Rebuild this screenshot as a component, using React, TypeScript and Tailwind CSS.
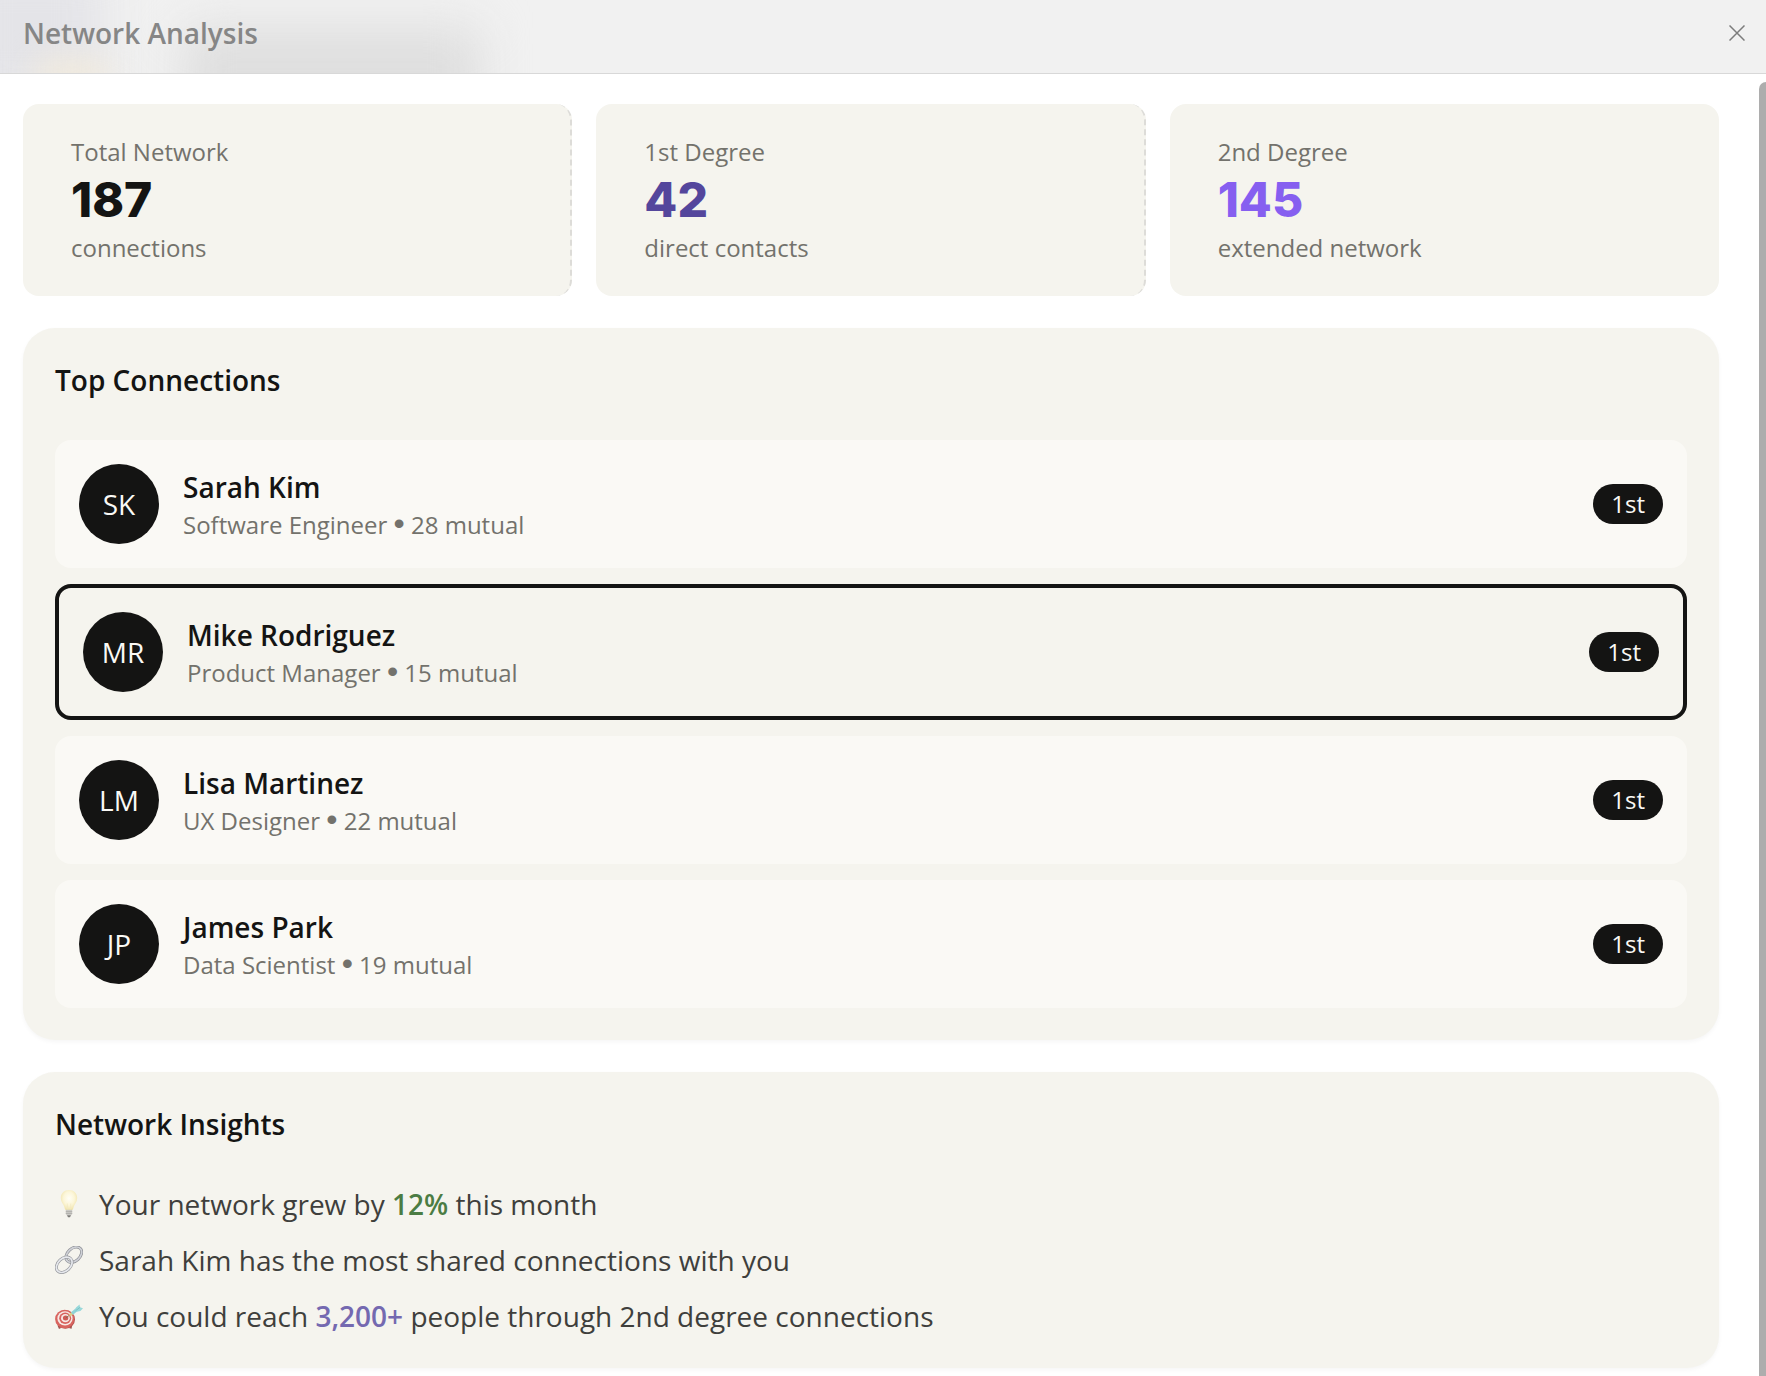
import { useId } from "react";

type Stat = { label: string; value: string; note: string; tone: string; divider: boolean };

const stats: Stat[] = [
  { label: "Total Network", value: "187", note: "connections", tone: "text-[#141413]", divider: true },
  { label: "1st Degree", value: "42", note: "direct contacts", tone: "text-[#54469c]", divider: true },
  { label: "2nd Degree", value: "145", note: "extended network", tone: "text-[#865ff0]", divider: false },
];

const people = [
  { initials: "SK", name: "Sarah Kim", role: "Software Engineer", mutual: 28, selected: false },
  { initials: "MR", name: "Mike Rodriguez", role: "Product Manager", mutual: 15, selected: true },
  { initials: "LM", name: "Lisa Martinez", role: "UX Designer", mutual: 22, selected: false },
  { initials: "JP", name: "James Park", role: "Data Scientist", mutual: 19, selected: false },
];

function CloseIcon() {
  return (
    <svg viewBox="0 0 16 16" className="size-4" fill="none" stroke="#7c7c7c" strokeWidth="1.5" aria-hidden="true">
      <path d="M0.5 0.5 15.5 15.5M15.5 0.5 0.5 15.5" />
    </svg>
  );
}

function BulbIcon() {
  const id = useId();
  return (
    <svg viewBox="0 0 28 28" className="size-7 shrink-0" aria-hidden="true">
      <defs>
        <radialGradient id={id} cx="0.5" cy="0.42" r="0.6">
          <stop offset="0" stopColor="#fffef6" />
          <stop offset="0.55" stopColor="#fcf6d8" />
          <stop offset="1" stopColor="#efe2a8" />
        </radialGradient>
      </defs>
      <path d="M14 0c-4.800 0-8.200 3.300-8.200 7.900 0 3.600 2.100 5.600 3.200 8.200.7 1.700.8 3.400 1.600 4h6.800c.8-.6.900-2.300 1.600-4 1.100-2.600 3.200-4.600 3.200-8.200C22.200 3.300 18.800 0 14 0Z" fill={`url(#${id})`} />
      <path d="M12.600 19.500 12.200 13.500M15.400 19.500 15.800 13.500" stroke="#f1e8c0" strokeWidth="0.7" />
      <path d="M10.800 19.800h6.400v4.200l-1.200 1.500H12l-1.200-1.500Z" fill="#cbcac6" />
      <path d="M10.800 21.600h6.400M10.800 23.500h6.400" stroke="#a9a8a4" strokeWidth="0.7" />
      <path d="M12 25.200h4l-1 2h-2Z" fill="#7d7c79" />
    </svg>
  );
}

function LinkIcon() {
  return (
    <svg viewBox="0 0 28 28" className="size-7 shrink-0" fill="none" aria-hidden="true">
      <g transform="rotate(-43 18.800 8.700)">
        <ellipse cx="18.800" cy="8.700" rx="9" ry="6.300" stroke="#8b8d93" strokeWidth="3" />
        <ellipse cx="18.800" cy="8.700" rx="9" ry="6.300" stroke="#cfd1d7" strokeWidth="1.700" />
      </g>
      <g transform="rotate(-43 9.200 18.800)">
        <ellipse cx="9.200" cy="18.800" rx="9" ry="6.300" stroke="#94969b" strokeWidth="3" />
        <ellipse cx="9.200" cy="18.800" rx="9" ry="6.300" stroke="#e6e8ed" strokeWidth="1.700" />
      </g>
    </svg>
  );
}

function TargetIcon() {
  return (
    <svg viewBox="0 0 28 28" className="size-7 shrink-0" aria-hidden="true">
      <path d="M3.500 23 5 26.500M16 23.500 15.500 26.500" stroke="#a05550" strokeWidth="2.200" />
      <ellipse cx="10.400" cy="17.400" rx="9.600" ry="9.400" fill="#b5504c" />
      <ellipse cx="9.700" cy="17" rx="9.600" ry="9.300" fill="#d9645f" />
      <ellipse cx="10" cy="16.400" rx="7.600" ry="7.200" fill="#f6e9e6" />
      <ellipse cx="10.200" cy="16.300" rx="6" ry="5.700" fill="#d9645f" />
      <ellipse cx="10.400" cy="16.200" rx="4.400" ry="4.100" fill="#f6e9e6" />
      <ellipse cx="10.600" cy="16.100" rx="2.700" ry="2.500" fill="#cf5a55" />
      <path d="M10.800 16 15 12.800" stroke="#7d6f55" strokeWidth="0.900" />
      <path d="M14.500 13.400 17.500 11" stroke="#dccb84" strokeWidth="2.600" />
      <path d="M17 11.500 22.500 7" stroke="#8fd3d6" strokeWidth="3.200" />
      <path d="M20 8.600 21 5.600 24.600 2.600 24.900 5.300 28 6.200 25.400 9 21.600 9.700Z" fill="#98d8da" />
      <path d="M20.500 8.800 25.200 5.200" stroke="#6fb9be" strokeWidth="0.700" />
    </svg>
  );
}

function StatCard({ stat }: { stat: Stat }) {
  return (
    <div className={`rounded-2xl bg-[#f5f4ee] py-8 pl-12 pr-8 ${stat.divider ? "border-r-2 border-dashed border-[#dddcd8]" : ""}`}>
      <p className="text-2xl leading-8 text-[#73726c]">{stat.label}</p>
      <p className={`font-[Inter,sans-serif] text-5xl leading-[64px] font-extrabold ${stat.tone}`}>{stat.value}</p>
      <p className="text-2xl leading-8 text-[#73726c]">{stat.note}</p>
    </div>
  );
}

export default function App() {
  return (
    <div className="flex min-h-screen flex-col bg-white font-['Open_Sans',sans-serif] text-[#141413]">
      <header className="relative flex h-[74px] items-center justify-between overflow-hidden border-b border-black/10 bg-[#f1f1f1] pb-2 pl-[23px] pr-[21px]">
        <div className="absolute -left-10 -top-10 h-36 w-36 bg-[#e4e4e8] blur-xl" />
        <div className="absolute left-9 top-15 h-8 w-18 bg-[#f2ebdc] blur-lg" />
        <div className="absolute left-46 top-7 h-24 w-74 bg-[#dedede] blur-xl" />
        <h1 className="relative text-[28px] leading-10 font-semibold text-[#868686]">Network Analysis</h1>
        <button type="button" aria-label="Close" className="relative flex size-4 items-center justify-center">
          <CloseIcon />
        </button>
      </header>

      <div className="flex flex-1">
        <main className="flex flex-1 flex-col gap-8 pb-2 pl-[23px] pr-10 pt-[30px]">
          <section aria-label="Network totals" className="grid grid-cols-3 gap-6">
            {stats.map((s) => (
              <StatCard key={s.label} stat={s} />
            ))}
          </section>

          <section className="rounded-[32px] bg-[#f5f4ee] p-8 shadow-[0_2px_4px_rgba(0,0,0,0.04)]">
            <h2 className="text-[28px] leading-10 font-semibold">Top Connections</h2>
            <ul className="mt-10 flex flex-col gap-4">
              {people.map((p) => (
                <li
                  key={p.name}
                  className={`flex items-center gap-6 rounded-2xl p-6 ${p.selected ? "border-4 border-[#141413] bg-[#f5f4ee]" : "bg-[#faf9f5]"}`}
                >
                  <span className="flex size-20 items-center justify-center rounded-full bg-[#141413] text-[28px] leading-10 text-[#faf9f5]">
                    {p.initials}
                  </span>
                  <div className="flex-1">
                    <p className="text-[28px] leading-10 font-semibold">{p.name}</p>
                    <p className="text-2xl leading-8 text-[#73726c]">
                      {p.role} <span className="font-['Liberation_Sans',sans-serif] text-[32px] leading-none">•</span> {p.mutual} mutual
                    </p>
                  </div>
                  <span className="rounded-full bg-[#141413] px-[18px] py-1 text-2xl leading-8 text-[#faf9f5]">1st</span>
                </li>
              ))}
            </ul>
          </section>

          <section className="rounded-[32px] bg-[#f5f4ee] p-8 shadow-[0_2px_4px_rgba(0,0,0,0.04)]">
            <h2 className="text-[28px] leading-10 font-semibold">Network Insights</h2>
            <ul className="mt-10 flex flex-col gap-4 text-[28px] leading-10 text-[#3f3f3c]">
              <li className="flex items-center gap-4">
                <BulbIcon />
                <p>
                  Your network grew by <strong className="font-semibold text-[#4b7c43]">12%</strong> this month
                </p>
              </li>
              <li className="flex items-center gap-4">
                <LinkIcon />
                <p>Sarah Kim has the most shared connections with you</p>
              </li>
              <li className="flex items-center gap-4">
                <TargetIcon />
                <p>
                  You could reach <strong className="font-semibold text-[#7469b0]">3,200+</strong> people through 2nd degree connections
                </p>
              </li>
            </ul>
          </section>
        </main>
        <div className="mt-2 w-[7px] rounded-tl-lg bg-[#adadad]" />
      </div>
    </div>
  );
}
